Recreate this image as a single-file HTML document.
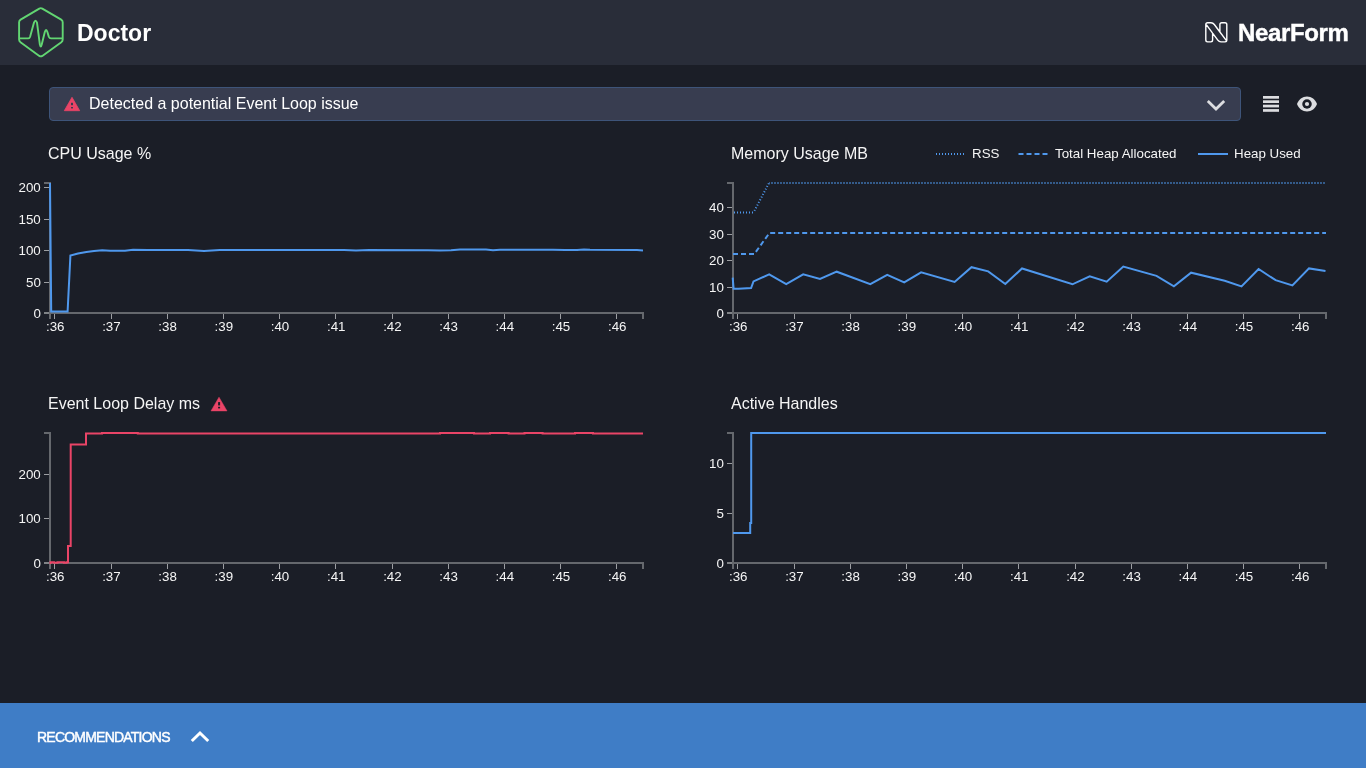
<!DOCTYPE html>
<html><head><meta charset="utf-8"><style>
html,body{margin:0;padding:0;width:1366px;height:768px;overflow:hidden;background:#1b1e27;font-family:"Liberation Sans",sans-serif;color:#f5f5f5;}
.abs{position:absolute;will-change:transform;}
#hdr{left:0;top:0;width:1366px;height:65px;background:#292d39;}
#title{left:77px;top:17px;font-size:23px;font-weight:bold;color:#fff;line-height:32px;}
#nf{left:1238px;top:18px;font-size:24px;font-weight:bold;color:#fff;line-height:30px;letter-spacing:-0.35px;-webkit-text-stroke:0.4px #fff;}
#alert{left:49px;top:87px;width:1190px;height:32px;background:#383d50;border:1px solid #3e5479;border-radius:4px;}
#alerttxt{left:89px;top:94px;font-size:16px;line-height:20px;color:#fff;transform:scaleY(1.035);transform-origin:0 15.54px;}
.ct{font-size:16px;line-height:20px;transform:scaleY(1.035);transform-origin:0 15.54px;}
#reco{left:0;top:703px;width:1366px;height:65px;background:#3f7dc6;}
#recotxt{left:37px;top:728px;font-size:14px;line-height:18px;color:#fff;letter-spacing:-0.78px;-webkit-text-stroke:0.45px #fff;}
</style></head><body>
<div id="hdr" class="abs"></div>
<svg class="abs" style="left:0;top:0" width="80" height="65" viewBox="0 0 80 65">
<path d="M39.3,8.6 Q40.8,7.7 42.3,8.6 L61.2,19.6 Q62.7,20.5 62.7,22.2 V39.6 Q62.7,41.3 61.3,42.2 L42.3,55.9 Q40.8,56.9 39.3,55.9 L20.5,42.2 Q19.1,41.3 19.1,39.6 V22.2 Q19.1,20.5 20.6,19.6 Z" fill="none" stroke="#62d672" stroke-width="1.9"/>
<path d="M19.1,38.4 H28.3 Q29.6,38.4 30.1,36.8 L34,22.6 Q35.5,18.8 37,22.6 L39.8,44.2 Q40.8,48.8 41.8,44.2 L44.8,32 Q46.1,27.8 47.4,32 L48.8,36.6 Q49.5,38.4 51,38.4 H62.7" fill="none" stroke="#62d672" stroke-width="1.9" stroke-linejoin="round"/>
</svg>
<div id="title" class="abs">Doctor</div>
<svg class="abs" style="left:1200px;top:18px" width="32" height="30" viewBox="1200 18 32 30">
<path d="M1205.8,24.5 Q1205.8,22.7 1207.6,22.7 H1211 Q1213,22.7 1214.3,24.5 L1219.9,32 V24.5 Q1219.9,22.7 1221.7,22.7 H1225 Q1226.8,22.7 1226.8,24.5 V40.1 Q1226.8,41.9 1225,41.9 H1221 Q1219,41.9 1217.8,40.1 L1212.6,33.2 V40.1 Q1212.6,41.9 1210.8,41.9 H1207.6 Q1205.8,41.9 1205.8,40.1 Z M1205.9,24.2 L1212.6,33.2 M1219.9,32 L1226.6,40.9" fill="none" stroke="#fff" stroke-width="1.4" stroke-linejoin="round"/>
</svg>
<div id="nf" class="abs">NearForm</div>
<div id="alert" class="abs"></div>
<svg class="abs" style="left:0;top:85px" width="100" height="30" viewBox="0 85 100 30">
<path d="M72,97.3 L79.7,110.7 H64.3 Z" fill="#ea4467" stroke="#ea4467" stroke-width="0.8" stroke-linejoin="round"/>
<rect x="71" y="102.8" width="2" height="2.4" fill="#383d50"/><rect x="71" y="107" width="2" height="1.4" fill="#383d50"/>
</svg>
<div id="alerttxt" class="abs">Detected a potential Event Loop issue</div>
<svg class="abs" style="left:1200px;top:88px" width="130" height="30" viewBox="1200 88 130 30">
<path d="M1207.8,101 L1216,109 L1224.2,101" fill="none" stroke="#dcdde0" stroke-width="2.8"/>
<rect x="1263" y="96" width="16" height="2.7" fill="#dcdde0"/><rect x="1263" y="100.3" width="16" height="2.7" fill="#dcdde0"/>
<rect x="1263" y="104.7" width="16" height="2.7" fill="#dcdde0"/><rect x="1263" y="109.1" width="16" height="2.7" fill="#dcdde0"/>
<path d="M1307,96.5 C1302.5,96.5 1298.5,99.6 1297,104 C1298.5,108.4 1302.5,111.5 1307,111.5 C1311.5,111.5 1315.5,108.4 1317,104 C1315.5,99.6 1311.5,96.5 1307,96.5 Z" fill="#dcdde0"/>
<circle cx="1307" cy="104" r="4.75" fill="#1b1e27"/>
<circle cx="1307" cy="104" r="2.1" fill="#dcdde0"/>
</svg>
<div class="abs ct" style="left:48px;top:144px">CPU Usage %</div>
<div class="abs ct" style="left:731px;top:144px">Memory Usage MB</div>
<div class="abs ct" style="left:48px;top:394px">Event Loop Delay ms</div>
<svg class="abs" style="left:200px;top:390px" width="40" height="26" viewBox="200 390 40 26">
<path d="M219,397.2 L227,410.9 H211 Z" fill="#ea4467" stroke="#ea4467" stroke-width="0.5" stroke-linejoin="round"/>
<rect x="218.1" y="402.1" width="2" height="3.3" fill="#1b1e27"/><rect x="218.1" y="406.8" width="2" height="1.6" fill="#1b1e27"/>
</svg>
<div class="abs ct" style="left:731px;top:394px">Active Handles</div>
<svg width="1366" height="768" style="position:absolute;left:0;top:0;will-change:transform" font-family="Liberation Sans, sans-serif" font-size="13.33" fill="#f5f5f5">
<path d="M44,183H50V313H44" fill="none" stroke="#65686d" stroke-width="2"/>
<path d="M50,319V313H643V319" fill="none" stroke="#65686d" stroke-width="2"/>
<rect x="44" y="187" width="5" height="1" fill="#9c9ea2"/>
<text transform="translate(40.8,192.2) scale(1,1)" text-anchor="end">200</text>
<rect x="44" y="219" width="5" height="1" fill="#9c9ea2"/>
<text transform="translate(40.8,224.2) scale(1,1)" text-anchor="end">150</text>
<rect x="44" y="250" width="5" height="1" fill="#9c9ea2"/>
<text transform="translate(40.8,255.2) scale(1,1)" text-anchor="end">100</text>
<rect x="44" y="282" width="5" height="1" fill="#9c9ea2"/>
<text transform="translate(40.8,287.2) scale(1,1)" text-anchor="end">50</text>
<rect x="44" y="312.5" width="5" height="1" fill="#9c9ea2"/>
<text transform="translate(40.8,317.7) scale(1,1)" text-anchor="end">0</text>
<rect x="54" y="314" width="1" height="5" fill="#9c9ea2"/>
<text transform="translate(55.20,331.3) scale(1,1)" text-anchor="middle">:36</text>
<rect x="111" y="314" width="1" height="5" fill="#9c9ea2"/>
<text transform="translate(111.40,331.3) scale(1,1)" text-anchor="middle">:37</text>
<rect x="167" y="314" width="1" height="5" fill="#9c9ea2"/>
<text transform="translate(167.60,331.3) scale(1,1)" text-anchor="middle">:38</text>
<rect x="223" y="314" width="1" height="5" fill="#9c9ea2"/>
<text transform="translate(223.80,331.3) scale(1,1)" text-anchor="middle">:39</text>
<rect x="279" y="314" width="1" height="5" fill="#9c9ea2"/>
<text transform="translate(280.00,331.3) scale(1,1)" text-anchor="middle">:40</text>
<rect x="335" y="314" width="1" height="5" fill="#9c9ea2"/>
<text transform="translate(336.20,331.3) scale(1,1)" text-anchor="middle">:41</text>
<rect x="392" y="314" width="1" height="5" fill="#9c9ea2"/>
<text transform="translate(392.40,331.3) scale(1,1)" text-anchor="middle">:42</text>
<rect x="448" y="314" width="1" height="5" fill="#9c9ea2"/>
<text transform="translate(448.60,331.3) scale(1,1)" text-anchor="middle">:43</text>
<rect x="504" y="314" width="1" height="5" fill="#9c9ea2"/>
<text transform="translate(504.80,331.3) scale(1,1)" text-anchor="middle">:44</text>
<rect x="560" y="314" width="1" height="5" fill="#9c9ea2"/>
<text transform="translate(561.00,331.3) scale(1,1)" text-anchor="middle">:45</text>
<rect x="616" y="314" width="1" height="5" fill="#9c9ea2"/>
<text transform="translate(617.20,331.3) scale(1,1)" text-anchor="middle">:46</text>
<path d="M727,183H733V313H727" fill="none" stroke="#65686d" stroke-width="2"/>
<path d="M733,319V313H1326V319" fill="none" stroke="#65686d" stroke-width="2"/>
<rect x="727" y="207" width="5" height="1" fill="#9c9ea2"/>
<text transform="translate(723.8,212.2) scale(1,1)" text-anchor="end">40</text>
<rect x="727" y="234" width="5" height="1" fill="#9c9ea2"/>
<text transform="translate(723.8,239.2) scale(1,1)" text-anchor="end">30</text>
<rect x="727" y="260" width="5" height="1" fill="#9c9ea2"/>
<text transform="translate(723.8,265.2) scale(1,1)" text-anchor="end">20</text>
<rect x="727" y="287" width="5" height="1" fill="#9c9ea2"/>
<text transform="translate(723.8,292.2) scale(1,1)" text-anchor="end">10</text>
<rect x="727" y="312.5" width="5" height="1" fill="#9c9ea2"/>
<text transform="translate(723.8,317.7) scale(1,1)" text-anchor="end">0</text>
<rect x="737" y="314" width="1" height="5" fill="#9c9ea2"/>
<text transform="translate(738.20,331.3) scale(1,1)" text-anchor="middle">:36</text>
<rect x="794" y="314" width="1" height="5" fill="#9c9ea2"/>
<text transform="translate(794.40,331.3) scale(1,1)" text-anchor="middle">:37</text>
<rect x="850" y="314" width="1" height="5" fill="#9c9ea2"/>
<text transform="translate(850.60,331.3) scale(1,1)" text-anchor="middle">:38</text>
<rect x="906" y="314" width="1" height="5" fill="#9c9ea2"/>
<text transform="translate(906.80,331.3) scale(1,1)" text-anchor="middle">:39</text>
<rect x="962" y="314" width="1" height="5" fill="#9c9ea2"/>
<text transform="translate(963.00,331.3) scale(1,1)" text-anchor="middle">:40</text>
<rect x="1018" y="314" width="1" height="5" fill="#9c9ea2"/>
<text transform="translate(1019.20,331.3) scale(1,1)" text-anchor="middle">:41</text>
<rect x="1075" y="314" width="1" height="5" fill="#9c9ea2"/>
<text transform="translate(1075.40,331.3) scale(1,1)" text-anchor="middle">:42</text>
<rect x="1131" y="314" width="1" height="5" fill="#9c9ea2"/>
<text transform="translate(1131.60,331.3) scale(1,1)" text-anchor="middle">:43</text>
<rect x="1187" y="314" width="1" height="5" fill="#9c9ea2"/>
<text transform="translate(1187.80,331.3) scale(1,1)" text-anchor="middle">:44</text>
<rect x="1243" y="314" width="1" height="5" fill="#9c9ea2"/>
<text transform="translate(1244.00,331.3) scale(1,1)" text-anchor="middle">:45</text>
<rect x="1299" y="314" width="1" height="5" fill="#9c9ea2"/>
<text transform="translate(1300.20,331.3) scale(1,1)" text-anchor="middle">:46</text>
<path d="M44,433H50V563H44" fill="none" stroke="#65686d" stroke-width="2"/>
<path d="M50,569V563H643V569" fill="none" stroke="#65686d" stroke-width="2"/>
<rect x="44" y="474" width="5" height="1" fill="#9c9ea2"/>
<text transform="translate(40.8,479.2) scale(1,1)" text-anchor="end">200</text>
<rect x="44" y="518" width="5" height="1" fill="#9c9ea2"/>
<text transform="translate(40.8,523.2) scale(1,1)" text-anchor="end">100</text>
<rect x="44" y="562.5" width="5" height="1" fill="#9c9ea2"/>
<text transform="translate(40.8,567.7) scale(1,1)" text-anchor="end">0</text>
<rect x="54" y="564" width="1" height="5" fill="#9c9ea2"/>
<text transform="translate(55.20,581.3) scale(1,1)" text-anchor="middle">:36</text>
<rect x="111" y="564" width="1" height="5" fill="#9c9ea2"/>
<text transform="translate(111.40,581.3) scale(1,1)" text-anchor="middle">:37</text>
<rect x="167" y="564" width="1" height="5" fill="#9c9ea2"/>
<text transform="translate(167.60,581.3) scale(1,1)" text-anchor="middle">:38</text>
<rect x="223" y="564" width="1" height="5" fill="#9c9ea2"/>
<text transform="translate(223.80,581.3) scale(1,1)" text-anchor="middle">:39</text>
<rect x="279" y="564" width="1" height="5" fill="#9c9ea2"/>
<text transform="translate(280.00,581.3) scale(1,1)" text-anchor="middle">:40</text>
<rect x="335" y="564" width="1" height="5" fill="#9c9ea2"/>
<text transform="translate(336.20,581.3) scale(1,1)" text-anchor="middle">:41</text>
<rect x="392" y="564" width="1" height="5" fill="#9c9ea2"/>
<text transform="translate(392.40,581.3) scale(1,1)" text-anchor="middle">:42</text>
<rect x="448" y="564" width="1" height="5" fill="#9c9ea2"/>
<text transform="translate(448.60,581.3) scale(1,1)" text-anchor="middle">:43</text>
<rect x="504" y="564" width="1" height="5" fill="#9c9ea2"/>
<text transform="translate(504.80,581.3) scale(1,1)" text-anchor="middle">:44</text>
<rect x="560" y="564" width="1" height="5" fill="#9c9ea2"/>
<text transform="translate(561.00,581.3) scale(1,1)" text-anchor="middle">:45</text>
<rect x="616" y="564" width="1" height="5" fill="#9c9ea2"/>
<text transform="translate(617.20,581.3) scale(1,1)" text-anchor="middle">:46</text>
<path d="M727,433H733V563H727" fill="none" stroke="#65686d" stroke-width="2"/>
<path d="M733,569V563H1326V569" fill="none" stroke="#65686d" stroke-width="2"/>
<rect x="727" y="463" width="5" height="1" fill="#9c9ea2"/>
<text transform="translate(723.8,468.2) scale(1,1)" text-anchor="end">10</text>
<rect x="727" y="513" width="5" height="1" fill="#9c9ea2"/>
<text transform="translate(723.8,518.2) scale(1,1)" text-anchor="end">5</text>
<rect x="727" y="562.5" width="5" height="1" fill="#9c9ea2"/>
<text transform="translate(723.8,567.7) scale(1,1)" text-anchor="end">0</text>
<rect x="737" y="564" width="1" height="5" fill="#9c9ea2"/>
<text transform="translate(738.20,581.3) scale(1,1)" text-anchor="middle">:36</text>
<rect x="794" y="564" width="1" height="5" fill="#9c9ea2"/>
<text transform="translate(794.40,581.3) scale(1,1)" text-anchor="middle">:37</text>
<rect x="850" y="564" width="1" height="5" fill="#9c9ea2"/>
<text transform="translate(850.60,581.3) scale(1,1)" text-anchor="middle">:38</text>
<rect x="906" y="564" width="1" height="5" fill="#9c9ea2"/>
<text transform="translate(906.80,581.3) scale(1,1)" text-anchor="middle">:39</text>
<rect x="962" y="564" width="1" height="5" fill="#9c9ea2"/>
<text transform="translate(963.00,581.3) scale(1,1)" text-anchor="middle">:40</text>
<rect x="1018" y="564" width="1" height="5" fill="#9c9ea2"/>
<text transform="translate(1019.20,581.3) scale(1,1)" text-anchor="middle">:41</text>
<rect x="1075" y="564" width="1" height="5" fill="#9c9ea2"/>
<text transform="translate(1075.40,581.3) scale(1,1)" text-anchor="middle">:42</text>
<rect x="1131" y="564" width="1" height="5" fill="#9c9ea2"/>
<text transform="translate(1131.60,581.3) scale(1,1)" text-anchor="middle">:43</text>
<rect x="1187" y="564" width="1" height="5" fill="#9c9ea2"/>
<text transform="translate(1187.80,581.3) scale(1,1)" text-anchor="middle">:44</text>
<rect x="1243" y="564" width="1" height="5" fill="#9c9ea2"/>
<text transform="translate(1244.00,581.3) scale(1,1)" text-anchor="middle">:45</text>
<rect x="1299" y="564" width="1" height="5" fill="#9c9ea2"/>
<text transform="translate(1300.20,581.3) scale(1,1)" text-anchor="middle">:46</text>
<polyline points="50.00,183.00 51.20,311.50 67.60,311.50 70.40,255.60 78.00,253.60 86.40,252.10 94.00,251.00 102.20,250.30 110.10,250.80 125.00,250.80 133.00,249.80 148.00,250.10 188.00,250.10 204.00,250.90 219.80,250.10 344.00,250.10 356.00,250.40 369.00,250.10 428.00,250.20 440.00,250.50 451.00,250.20 460.00,249.60 486.00,249.60 493.00,250.20 500.00,249.80 553.00,249.80 565.00,250.10 577.00,250.10 584.00,249.60 590.00,249.80 637.00,250.10 643.00,250.50" fill="none" stroke="#4f98ed" stroke-width="2"/>
<polyline points="733,212.6 753.5,212.6" fill="none" stroke="#4f98ed" stroke-width="2" stroke-dasharray="1 2" stroke-dashoffset="2"/>
<polyline points="753.5,212.6 769,183" fill="none" stroke="#4f98ed" stroke-width="2" stroke-dasharray="1 2" stroke-dashoffset="1"/>
<polyline points="769,183 1326,183" fill="none" stroke="#4f98ed" stroke-width="2" stroke-dasharray="1 2" stroke-dashoffset="0.5"/>
<polyline points="733.00,254.00 754.30,254.00 769.50,232.90 1326.00,232.90" fill="none" stroke="#4f98ed" stroke-width="2" stroke-dasharray="5 3"/>
<polyline points="732.70,277.60 733.60,288.70 738.50,288.70 751.10,288.10 753.50,281.40 769.20,274.30 786.20,284.20 803.20,274.30 820.00,279.00 836.70,271.70 870.30,284.20 887.20,274.80 904.20,282.40 921.10,272.40 954.60,281.90 971.50,267.20 988.20,271.40 1005.30,284.00 1022.00,268.50 1072.50,284.30 1089.70,276.40 1106.70,281.70 1123.30,266.60 1156.50,275.90 1173.90,286.40 1191.10,272.70 1224.70,280.80 1241.50,286.40 1258.60,269.00 1275.60,280.20 1292.40,285.40 1309.00,268.40 1325.50,270.90" fill="none" stroke="#4f98ed" stroke-width="2"/>
<polyline points="49.50,563.00 50.50,563.00 50.50,562.20 54.00,562.20 54.00,562.80 57.50,562.80 57.50,562.20 64.00,562.20 64.00,562.80 66.50,562.80 66.50,562.20 68.00,562.20 68.00,546.00 70.70,546.00 70.70,444.50 86.00,444.50 86.00,433.50 102.00,433.50 102.00,432.90 137.80,432.90 137.80,433.50 440.00,433.50 440.00,432.90 474.00,432.90 474.00,433.50 490.00,433.50 490.00,432.90 508.60,432.90 508.60,433.50 524.50,433.50 524.50,432.90 542.60,432.90 542.60,433.50 575.00,433.50 575.00,432.90 593.00,432.90 593.00,433.50 643.00,433.50" fill="none" stroke="#ea4467" stroke-width="2"/>
<polyline points="733.00,533.00 750.20,533.00 750.20,523.00 751.20,523.00 751.20,433.00 1326.00,433.00" fill="none" stroke="#4f98ed" stroke-width="2"/>
<line x1="936" x2="966" y1="154" y2="154" stroke="#4f98ed" stroke-width="2" stroke-dasharray="1 2"/>
<text transform="translate(972,158) scale(1,1)">RSS</text>
<line x1="1018.5" x2="1048.5" y1="154" y2="154" stroke="#4f98ed" stroke-width="2" stroke-dasharray="5 3"/>
<text transform="translate(1055,158) scale(1,1)">Total Heap Allocated</text>
<line x1="1198" x2="1228" y1="154" y2="154" stroke="#4f98ed" stroke-width="2"/>
<text transform="translate(1234,158) scale(1,1)">Heap Used</text>
</svg>
<div id="reco" class="abs"></div>
<div id="recotxt" class="abs">RECOMMENDATIONS</div>
<svg class="abs" style="left:180px;top:720px" width="40" height="30" viewBox="180 720 40 30">
<path d="M191.8,741 L200,733 L208.2,741" fill="none" stroke="#fff" stroke-width="3"/>
</svg>
</body></html>
